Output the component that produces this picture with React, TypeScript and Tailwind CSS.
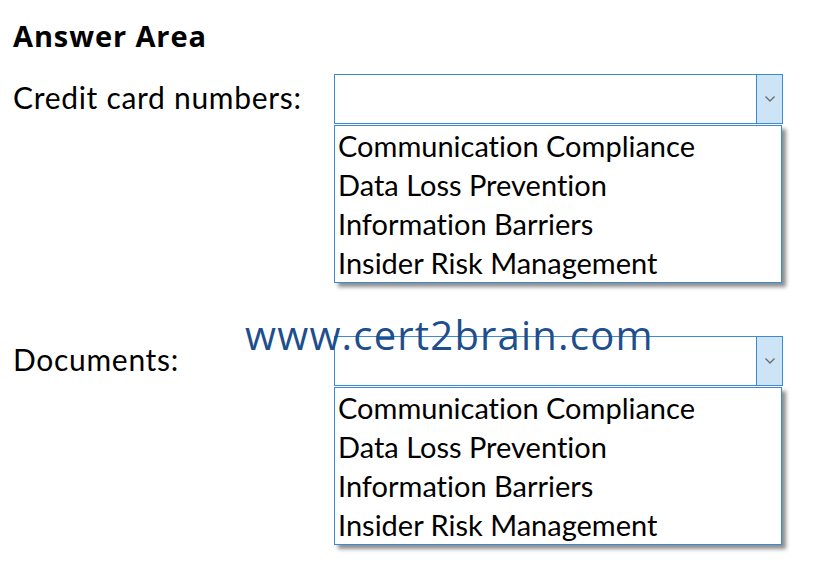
import React from "react";

const items = [
  "Communication Compliance",
  "Data Loss Prevention",
  "Information Barriers",
  "Insider Risk Management",
];

function Dropdown() {
  return (
    <div className="w-[449px]">
      <div className="h-[50px] flex border border-[#3a8ad6] bg-white">
        <div className="flex-1" />
        <div className="w-[26px] bg-[#cde3f6] border-l border-[#3a8ad6] flex items-center justify-center">
          <svg width="12" height="8" viewBox="0 0 12 8">
            <path d="M1.5 1.5 L6 6 L10.5 1.5" fill="none" stroke="#6b6b6b" strokeWidth="1.3" />
          </svg>
        </div>
      </div>
      <div className="mt-px w-[448px] border border-[#3a8ad6] bg-white shadow-[4px_4px_4px_rgba(0,0,0,0.45)] flex flex-col">
        {items.map((t) => (
          <div
            key={t}
            className="h-[39px] leading-[39px] pl-[3px] text-[29px] text-black whitespace-nowrap [font-variant-ligatures:none]"
          >
            {t}
          </div>
        ))}
      </div>
    </div>
  );
}

export default function App() {
  return (
    <div
      className="relative w-[815px] h-[572px] bg-white text-black overflow-hidden pl-[13px] pt-[18px]"
      style={{ fontFamily: "Lato, 'Open Sans', sans-serif" }}
    >
      <div
        className="text-[29px] font-bold leading-[36px] tracking-[0.9px]"
        style={{ fontFamily: "'Open Sans', sans-serif" }}
      >
        Answer Area
      </div>
      <div className="mt-[20px] flex">
        <div className="w-[321px] text-[30px] leading-[36px] pt-[5px] tracking-[0.7px] [font-variant-ligatures:none]">
          Credit card numbers:
        </div>
        <Dropdown />
      </div>
      <div className="mt-[53px] flex">
        <div className="w-[321px] text-[30px] leading-[36px] pt-[5px] tracking-[0.7px]">Documents:</div>
        <Dropdown />
      </div>
      <div
        className="absolute left-[245px] top-[310px] text-[40px] leading-[50px] tracking-[1.2px] text-[#1f4e8c]"
        style={{ fontFamily: "'Open Sans', sans-serif" }}
      >
        www.cert2brain.com
      </div>
    </div>
  );
}
